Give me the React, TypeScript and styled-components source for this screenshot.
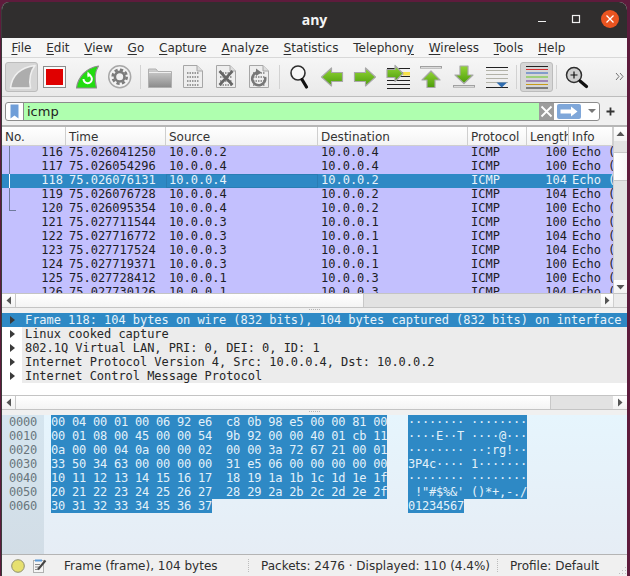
import React from 'react';
import styled, { createGlobalStyle } from 'styled-components';

const GlobalStyle = createGlobalStyle`
  html, body {
    margin: 0;
    padding: 0;
    height: 576px;
    overflow: hidden;
    background: #5e1b3c;
  }
`;

const Window = styled.div`
  box-sizing: border-box;
  width: 626px;
  height: 574px;
  margin: 2px 0 0 1px;
  border-left: 1px solid #3a3a3a;
  border-radius: 8px 8px 0 0;
  background: #f0f0f0;
  display: flex;
  flex-direction: column;
  overflow: hidden;
  font-family: 'DejaVu Sans', sans-serif;
  font-size: 12px;
  color: #2e2e2e;
`;

const TitleBar = styled.div`
  height: 36px;
  flex: none;
  box-sizing: border-box;
  padding-bottom: 1px;
  position: relative;
  background: #302e2e;
  display: flex;
  align-items: center;
  justify-content: center;
`;

const Title = styled.div`
  font-family: 'Open Sans', sans-serif;
  font-weight: 700;
  font-size: 14px;
  color: #f4f4f4;
`;

const WindowControls = styled.div`
  position: absolute;
  right: 0;
  top: 0;
  height: 34px;
  display: flex;
  align-items: center;
`;

const ControlSlot = styled.div`
  width: 34px;
  height: 34px;
  display: flex;
  align-items: center;
  justify-content: center;
`;

const CloseDot = styled.div`
  width: 18px;
  height: 18px;
  border-radius: 50%;
  background: #e95420;
  display: flex;
  align-items: center;
  justify-content: center;
`;

const MenuBar = styled.div`
  height: 19px;
  flex: none;
  display: flex;
  align-items: center;
  padding-left: 2px;
  background: #f6f6f6;
  border-bottom: 1px solid #d8d8d8;
`;

const MenuItem = styled.div`
  padding: 0 7.4px;
  white-space: pre;
  u {
    text-underline-offset: 2px;
  }
`;

const ToolBar = styled.div`
  height: 39px;
  flex: none;
  box-sizing: border-box;
  display: flex;
  align-items: flex-start;
  padding: 4px 0 0 3px;
  background: linear-gradient(#f6f6f6, #e9e9e9);
  border-bottom: 1px solid #bdbdbd;
`;

const ToolSlot = styled.div<{ $active?: boolean }>`
  box-sizing: border-box;
  width: 33px;
  height: 30px;
  flex: none;
  border-radius: 3px;
  border: ${p => (p.$active ? '1px solid #bcbcbc' : '1px solid transparent')};
  background: ${p => (p.$active ? '#d6d6d6' : 'transparent')};
  svg {
    display: block;
    margin: -1px;
  }
`;

const ToolSep = styled.div<{ $w: number }>`
  width: ${p => p.$w}px;
  height: 30px;
  flex: none;
  display: flex;
  justify-content: center;
  &::before {
    content: '';
    width: 1px;
    margin: 3px 0;
    background: #d2d2d2;
  }
`;

const OverflowMark = styled.div`
  margin-left: 22px;
  margin-top: 10px;
  svg {
    display: block;
  }
`;

const FilterRow = styled.div`
  height: 30px;
  flex: none;
  box-sizing: border-box;
  display: flex;
  align-items: flex-start;
  padding: 5px 0 0 3px;
  background: #f0f0f0;
  border-bottom: 2px solid #b6b6b6;
`;

const FilterField = styled.div`
  box-sizing: border-box;
  width: 595px;
  height: 19px;
  display: flex;
  align-items: stretch;
  border: 1px solid #8c8c8c;
  border-radius: 3px;
  background: #ffffff;
  overflow: hidden;
`;

const BookmarkBox = styled.div`
  width: 17px;
  flex: none;
  border-right: 1px solid #8c8c8c;
  display: flex;
  align-items: center;
  justify-content: center;
`;

const FilterInput = styled.div`
  width: 515px;
  flex: none;
  background: #afffaf;
  padding-left: 3px;
  box-sizing: border-box;
  font-size: 13px;
  line-height: 17px;
  color: #222;
`;

const ClearButton = styled.div`
  width: 15px;
  flex: none;
  background: #9c9c9c;
  display: flex;
  align-items: center;
  justify-content: center;
`;

const ApplyButton = styled.div`
  width: 24px;
  flex: none;
  margin: 1px 0 1px 3px;
  border-radius: 2px;
  background: #7fa7d9;
  display: flex;
  align-items: center;
  justify-content: center;
`;

const DropArrow = styled.div`
  margin: 6px 0 0 7px;
  width: 0;
  height: 0;
  border-left: 4px solid transparent;
  border-right: 4px solid transparent;
  border-top: 4px solid #777;
`;

const PlusButton = styled.div`
  margin: 5px 0 0 6px;
  svg {
    display: block;
  }
`;

const columns = '64px 100px 152px 150px 59px 42px 44px';

const ListPane = styled.div`
  height: 181px;
  flex: none;
  box-sizing: border-box;
  display: grid;
  grid-template-columns: 611px 14px;
  grid-template-rows: 166px 14px;
  border-bottom: 1px solid #c4c4c4;
`;

const PacketTable = styled.div`
  overflow: hidden;
  display: flex;
  flex-direction: column;
  background: #c3c0fe;
`;

const HeaderRow = styled.div`
  height: 19px;
  flex: none;
  display: grid;
  grid-template-columns: ${columns};
  background: linear-gradient(#ffffff, #f3f3f3);
`;

const HeaderCell = styled.div`
  box-sizing: border-box;
  padding-left: 3px;
  line-height: 20px;
  overflow: hidden;
  white-space: nowrap;
  border-right: 1px solid #cfcfcf;
  border-bottom: 1px solid #cfcfcf;
  color: #333;
`;

const PacketRow = styled.div<{ $selected?: boolean }>`
  height: 14px;
  flex: none;
  display: grid;
  grid-template-columns: ${columns};
  background: ${p => (p.$selected ? '#2e89c5' : 'transparent')};
  color: ${p => (p.$selected ? '#e8f3fa' : '#1d1d24')};
  font-family: 'DejaVu Sans Mono', monospace;
  font-size: 12px;
  line-height: 12px;
`;

const Cell = styled.div<{ $right?: boolean; $focus?: boolean }>`
  box-sizing: border-box;
  padding: ${p => (p.$right ? '0 2px 0 0' : '0 0 0 3px')};
  text-align: ${p => (p.$right ? 'right' : 'left')};
  white-space: pre;
  overflow: hidden;
  box-shadow: ${p => (p.$focus ? 'inset 0 0 0 1px #2a7db4' : 'none')};
`;

const NumberCell = styled(Cell)<{ $link?: 'mid' | 'end'; $selected?: boolean }>`
  position: relative;
  padding-right: 3px;
  &::before {
    content: ${p => (p.$link ? "''" : 'none')};
    position: absolute;
    left: 7px;
    top: 0;
    width: 1px;
    height: ${p => (p.$link === 'end' ? '8px' : '14px')};
    background: ${p => (p.$selected ? '#ffffff' : '#6f7a9c')};
  }
  &::after {
    content: ${p => (p.$link === 'end' ? "''" : 'none')};
    position: absolute;
    left: 7px;
    top: 8px;
    width: 7px;
    height: 1px;
    background: #6f7a9c;
  }
`;

const VScroll = styled.div`
  display: flex;
  flex-direction: column;
  background: #e2e2e2;
  border-left: 1px solid #cfcfcf;
`;

const ScrollButton = styled.div<{ $w?: number; $h?: number }>`
  box-sizing: border-box;
  flex: none;
  width: ${p => (p.$w ? `${p.$w}px` : '100%')};
  height: ${p => (p.$h ? `${p.$h}px` : '100%')};
  background: linear-gradient(#ffffff, #f2f2f2);
  display: flex;
  align-items: center;
  justify-content: center;
`;

const ScrollThumbV = styled.div`
  height: 27px;
  flex: none;
  margin-top: 11px;
  background: linear-gradient(90deg, #ffffff, #f6f6f6);
  border-top: 1px solid #c8c8c8;
  border-bottom: 1px solid #c8c8c8;
`;

const Spacer = styled.div`
  flex: 1;
`;

const HScroll = styled.div`
  display: flex;
  background: #e2e2e2;
  border-top: 1px solid #c4c4c4;
  box-sizing: border-box;
  height: 14px;
`;

const ScrollThumbH = styled.div<{ $w: number }>`
  width: ${p => p.$w}px;
  flex: none;
  background: linear-gradient(#ffffff, #f4f4f4);
  border-left: 1px solid #c8c8c8;
  border-right: 1px solid #c8c8c8;
  box-sizing: border-box;
`;

const Corner = styled.div`
  background: #ececec;
  border-top: 1px solid #c4c4c4;
  border-left: 1px solid #cfcfcf;
`;

const Splitter = styled.div`
  height: 5px;
  flex: none;
  background: #f0f0f0;
  display: flex;
  justify-content: center;
  padding-top: 1px;
  box-sizing: border-box;
  &::before {
    content: '';
    width: 11px;
    height: 1px;
    background: repeating-linear-gradient(90deg, #b4b4b4 0 1px, transparent 1px 2px);
  }
`;

const DetailPane = styled.div`
  height: 97px;
  flex: none;
  background: #ffffff;
  display: flex;
  flex-direction: column;
`;

const TreeRow = styled.div<{ $selected?: boolean }>`
  height: 14px;
  flex: none;
  display: flex;
  align-items: center;
  padding-left: 8px;
  background: ${p => (p.$selected ? '#2e89c5' : 'transparent')};
  color: ${p => (p.$selected ? '#e8f3fa' : '#262626')};
  font-family: 'DejaVu Sans Mono', monospace;
  font-size: 12px;
  line-height: 14px;
  letter-spacing: -0.04px;
`;

const TreeArrow = styled.div`
  width: 0;
  height: 0;
  flex: none;
  border-top: 4px solid transparent;
  border-bottom: 4px solid transparent;
  border-left: 5px solid #3a3a3a;
`;

const TreeText = styled.div<{ $selected?: boolean }>`
  flex: 1;
  align-self: stretch;
  margin-left: 7px;
  padding-left: 3px;
  white-space: pre;
  overflow: hidden;
  background: ${p => (p.$selected ? 'transparent' : '#ececec')};
`;

const DetailScroll = styled.div`
  height: 13px;
  flex: none;
  margin-top: 12px;
  display: flex;
  background: #e2e2e2;
  border-top: 1px solid #c4c4c4;
  border-bottom: 1px solid #c4c4c4;
`;

const HexPane = styled.div`
  height: 139px;
  flex: none;
  display: flex;
  background: linear-gradient(#e6f5fd, #e6edf5);
  font-family: 'DejaVu Sans Mono', monospace;
  font-size: 12px;
  line-height: 14px;
  letter-spacing: -0.22px;
  white-space: pre;
`;

const OffsetColumn = styled.div`
  width: 42px;
  flex: none;
  box-sizing: border-box;
  padding-left: 7px;
  background: linear-gradient(#d5e5ef, #d2dde6);
  color: #69767d;
`;

const HexColumn = styled.div`
  width: 357px;
  flex: none;
  margin-left: 7px;
`;

const AsciiColumn = styled.div`
  flex: 1;
`;

const ByteLine = styled.div`
  height: 14px;
`;

const Selected = styled.span`
  background: #2e89c5;
  color: #e3f1fa;
  display: inline-block;
  height: 14px;
`;

const StatusBar = styled.div`
  flex: 1;
  position: relative;
  display: flex;
  align-items: center;
  background: #f0f0f0;
  border-top: 1px solid #b4b4b4;
  color: #2e2e2e;
`;

const StatusIcons = styled.div`
  width: 62px;
  flex: none;
  display: flex;
  align-items: center;
  padding-left: 9px;
  box-sizing: border-box;
  gap: 7px;
  svg {
    display: block;
  }
`;

const StatusText = styled.div<{ $w: number }>`
  width: ${p => p.$w}px;
  flex: none;
  white-space: pre;
`;

const StatusSep = styled.div`
  width: 1px;
  height: 14px;
  flex: none;
  margin-right: 12px;
  background: repeating-linear-gradient(#bcbcbc 0 1px, transparent 1px 2px);
`;

const Grip = styled.div`
  position: absolute;
  right: 0;
  bottom: 1px;
  width: 8px;
  height: 8px;
  svg {
    display: block;
  }
`;

const Icon = (props: React.SVGProps<SVGSVGElement>) => (
  <svg width={33} height={30} viewBox="0 0 33 30" fill="none" {...props} />
);

const GreenShape = ({ id, d }: { id: string; d: string }) => (
  <>
    <defs>
      <linearGradient id={id} x1="0" y1="0" x2="0" y2="1">
        <stop offset="0" stopColor="#93d636" />
        <stop offset="1" stopColor="#4c9c0a" />
      </linearGradient>
    </defs>
    <path d={d} fill={`url(#${id})`} stroke="#a8a8a8" strokeWidth="1.2" strokeLinejoin="round" />
  </>
);

const DocShape = ({ children }: { children?: React.ReactNode }) => (
  <>
    <path d="M6.5 3.5H20L25.5 9V25.5H6.5Z" fill="#eeeeee" stroke="#a6a6a6" />
    <path d="M20 3.5V9H25.5" fill="#dddddd" stroke="#a6a6a6" />
    {[11, 15, 19, 23].map(y => (
      <path key={y} d={`M10 ${y}H22`} stroke="#9a9a9a" strokeWidth="2" strokeDasharray="1.5 1" />
    ))}
    {children}
  </>
);

const menus: React.ReactNode[] = [
  <><u>F</u>ile</>,
  <><u>E</u>dit</>,
  <><u>V</u>iew</>,
  <><u>G</u>o</>,
  <><u>C</u>apture</>,
  <><u>A</u>nalyze</>,
  <><u>S</u>tatistics</>,
  <>Telephon<u>y</u></>,
  <><u>W</u>ireless</>,
  <><u>T</u>ools</>,
  <><u>H</u>elp</>,
];

const packets = [
  ['116', '75.026041250', '10.0.0.2', '10.0.0.4', '100'],
  ['117', '75.026054296', '10.0.0.4', '10.0.0.4', '100'],
  ['118', '75.026076131', '10.0.0.4', '10.0.0.2', '104'],
  ['119', '75.026076728', '10.0.0.4', '10.0.0.2', '104'],
  ['120', '75.026095354', '10.0.0.4', '10.0.0.2', '100'],
  ['121', '75.027711544', '10.0.0.3', '10.0.0.1', '100'],
  ['122', '75.027716772', '10.0.0.3', '10.0.0.1', '104'],
  ['123', '75.027717524', '10.0.0.3', '10.0.0.1', '104'],
  ['124', '75.027719371', '10.0.0.3', '10.0.0.1', '100'],
  ['125', '75.027728412', '10.0.0.1', '10.0.0.3', '100'],
  ['126', '75.027730126', '10.0.0.1', '10.0.0.3', '104'],
];

const treeRows = [
  'Frame 118: 104 bytes on wire (832 bits), 104 bytes captured (832 bits) on interface',
  'Linux cooked capture',
  '802.1Q Virtual LAN, PRI: 0, DEI: 0, ID: 1',
  'Internet Protocol Version 4, Src: 10.0.0.4, Dst: 10.0.0.2',
  'Internet Control Message Protocol',
];

const hexLines = [
  ['0000', '00 04 00 01 00 06 92 e6  c8 0b 98 e5 00 00 81 00', '········ ········'],
  ['0010', '00 01 08 00 45 00 00 54  9b 92 00 00 40 01 cb 11', '····E··T ····@···'],
  ['0020', '0a 00 00 04 0a 00 00 02  00 00 3a 72 67 21 00 01', '········ ··:rg!··'],
  ['0030', '33 50 34 63 00 00 00 00  31 e5 06 00 00 00 00 00', '3P4c···· 1·······'],
  ['0040', '10 11 12 13 14 15 16 17  18 19 1a 1b 1c 1d 1e 1f', '········ ········'],
  ['0050', '20 21 22 23 24 25 26 27  28 29 2a 2b 2c 2d 2e 2f', ' !"#$%&\' ()*+,-./'],
  ['0060', '30 31 32 33 34 35 36 37', '01234567'],
];

const TriLeft = () => (
  <svg width="6" height="9" viewBox="0 0 6 9"><path d="M5 0.5V8.5L0.5 4.5Z" fill="#555" /></svg>
);
const TriRight = () => (
  <svg width="6" height="9" viewBox="0 0 6 9"><path d="M1 0.5V8.5L5.5 4.5Z" fill="#555" /></svg>
);

const App: React.FC = () => {
  return (
    <>
      <GlobalStyle />
      <Window>
        <TitleBar>
          <Title>any</Title>
          <WindowControls>
            <ControlSlot>
              <svg width="10" height="10" viewBox="0 0 10 10"><path d="M1 7.5H9" stroke="#f0f0f0" strokeWidth="1.2" /></svg>
            </ControlSlot>
            <ControlSlot>
              <svg width="10" height="10" viewBox="0 0 10 10"><rect x="1.5" y="1.5" width="7" height="7" stroke="#f0f0f0" strokeWidth="1.2" fill="none" /></svg>
            </ControlSlot>
            <ControlSlot>
              <CloseDot>
                <svg width="10" height="10" viewBox="0 0 10 10"><path d="M1.5 1.5L8.5 8.5M8.5 1.5L1.5 8.5" stroke="#fff" strokeWidth="1.3" /></svg>
              </CloseDot>
            </ControlSlot>
          </WindowControls>
        </TitleBar>

        <MenuBar>
          {menus.map((m, i) => (
            <MenuItem key={i}>{m}</MenuItem>
          ))}
        </MenuBar>

        <ToolBar>
          <ToolSlot $active>
            <Icon>
              <path d="M5.5 26C7 14 15 5.5 30 3.5C25 10 24 18 25.5 26Z" fill="#adadad" stroke="#efefef" strokeWidth="1.6" strokeLinejoin="round" />
            </Icon>
          </ToolSlot>
          <ToolSlot>
            <Icon>
              <rect x="5.5" y="4.5" width="22" height="21" fill="#fafafa" stroke="#8a8a8a" />
              <rect x="8" y="7" width="17" height="16" fill="#e00000" />
            </Icon>
          </ToolSlot>
          <ToolSlot>
            <Icon>
              <path d="M5.5 26C7 15 15 6 27.5 4C23.5 10 23.5 18 25.5 26Z" fill="#22dd10" stroke="#8c8c8c" strokeWidth="1.2" strokeLinejoin="round" />
              <path d="M12.5 17A4.2 4.2 0 1 0 16.5 12.8" stroke="#ffffff" strokeWidth="2" />
              <path d="M16.5 9.5L20 13L16.5 15.5Z" fill="#ffffff" />
            </Icon>
          </ToolSlot>
          <ToolSlot>
            <Icon>
              <circle cx="15.7" cy="14.7" r="11" fill="#f2f2f2" stroke="#a8a8a8" strokeWidth="1.5" />
              <circle cx="15.7" cy="14.7" r="7" stroke="#7c7c7c" strokeWidth="2.6" strokeDasharray="3.2 2.3" />
              <circle cx="15.7" cy="14.7" r="4.8" stroke="#7c7c7c" strokeWidth="2.6" />
            </Icon>
          </ToolSlot>
          <ToolSep $w={7} />
          <ToolSlot>
            <Icon>
              <defs>
                <linearGradient id="folderFill" x1="0" y1="0" x2="0" y2="1">
                  <stop offset="0" stopColor="#d2d2d2" />
                  <stop offset="1" stopColor="#8a8a8a" />
                </linearGradient>
              </defs>
              <path d="M4.5 25.5V7H12L14 9.5H27.5V25.5Z" fill="url(#folderFill)" stroke="#b0b0b0" />
              <path d="M5 10.5H27" stroke="#efefef" />
            </Icon>
          </ToolSlot>
          <ToolSlot>
            <Icon><DocShape /></Icon>
          </ToolSlot>
          <ToolSlot>
            <Icon>
              <DocShape>
                <path d="M9.5 9L22.5 23M22.5 9L9.5 23" stroke="#666666" strokeWidth="2.6" />
              </DocShape>
            </Icon>
          </ToolSlot>
          <ToolSlot>
            <Icon>
              <DocShape>
                <path d="M14 10.5A6.5 6.5 0 1 0 22 15" stroke="#777777" strokeWidth="2.6" />
                <path d="M13 6.5L18.5 10.5L13 14Z" fill="#777777" />
              </DocShape>
            </Icon>
          </ToolSlot>
          <ToolSep $w={6} />
          <ToolSlot>
            <Icon>
              <circle cx="16" cy="11" r="7" fill="#f7f7f7" stroke="#2e2e2e" strokeWidth="1.6" />
              <path d="M20 17.5L24.5 25" stroke="#111111" strokeWidth="3.2" strokeLinecap="round" />
            </Icon>
          </ToolSlot>
          <ToolSlot>
            <Icon><GreenShape id="goBack" d="M6.5 15L16.5 6V10.5H27.5V19.5H16.5V24Z" /></Icon>
          </ToolSlot>
          <ToolSlot>
            <Icon><GreenShape id="goForward" d="M27.5 15L17.5 6V10.5H6.5V19.5H17.5V24Z" /></Icon>
          </ToolSlot>
          <ToolSlot>
            <Icon>
              {[6, 10, 14, 18, 22, 26].map(y => (
                <path key={y} d={`M6 ${y + 0.5}H29`} stroke="#222222" />
              ))}
              <rect x="22" y="10" width="7" height="3.5" fill="#f7e04a" />
              <GreenShape id="goTo" d="M22 11.5L14 3.5V7.5H6V15.5H14V19.5Z" />
            </Icon>
          </ToolSlot>
          <ToolSlot>
            <Icon>
              <rect x="6.5" y="4.5" width="21" height="1.6" fill="#ffffff" stroke="#a0a0a0" />
              <GreenShape id="goFirst" d="M17 9L26 18H21V25.5H13V18H8Z" />
            </Icon>
          </ToolSlot>
          <ToolSlot>
            <Icon>
              <GreenShape id="goLast" d="M13 4H21V13H26L17 21.5L8 13H13Z" />
              <rect x="6.5" y="23.5" width="21" height="1.6" fill="#ffffff" stroke="#a0a0a0" />
            </Icon>
          </ToolSlot>
          <ToolSlot>
            <Icon>
              <path d="M6 5.5H28M6 25.5H28" stroke="#222222" />
              {[8.5, 12.5, 16.5, 20.5].map(y => (
                <path key={y} d={`M6 ${y}H28`} stroke="#b2b2a8" strokeWidth="1.2" />
              ))}
              <path d="M16.5 20.5H27L21.7 25.5Z" fill="#2e6cb0" />
            </Icon>
          </ToolSlot>
          <ToolSep $w={7} />
          <ToolSlot $active>
            <Icon>
              <path d="M6 4.5H28" stroke="#222222" />
              <path d="M6 7.5H28" stroke="#d83030" />
              <path d="M6 11H28" stroke="#2e62c0" />
              <path d="M6 15H28" stroke="#66c820" />
              <path d="M6 19H28" stroke="#6a3a96" />
              <path d="M6 22.5H28" stroke="#c89a18" />
              <path d="M6 26H28" stroke="#222222" />
            </Icon>
          </ToolSlot>
          <ToolSep $w={7} />
          <ToolSlot>
            <Icon>
              <circle cx="14" cy="13" r="7.5" fill="#cfcfcf" stroke="#2e2e2e" strokeWidth="1.5" />
              <path d="M10.5 13H17.5M14 9.5V16.5" stroke="#111111" strokeWidth="1.2" />
              <path d="M20 19L26.5 24.5" stroke="#111111" strokeWidth="3.2" strokeLinecap="round" />
            </Icon>
          </ToolSlot>
          <OverflowMark>
            <svg width="9" height="9" viewBox="0 0 9 9" fill="none">
              <path d="M1 1L4 4.5L1 8M5 1L8 4.5L5 8" stroke="#707070" />
            </svg>
          </OverflowMark>
        </ToolBar>

        <FilterRow>
          <FilterField>
            <BookmarkBox>
              <svg width="9" height="15" viewBox="0 0 9 15"><path d="M0.5 0.5H8.5V14.5L4.5 11.5L0.5 14.5Z" fill="#6f9ed8" /></svg>
            </BookmarkBox>
            <FilterInput>icmp</FilterInput>
            <ClearButton>
              <svg width="13" height="13" viewBox="0 0 13 13"><path d="M1.5 1.5L11.5 11.5M11.5 1.5L1.5 11.5" stroke="#ffffff" strokeWidth="1.8" /></svg>
            </ClearButton>
            <ApplyButton>
              <svg width="18" height="11" viewBox="0 0 18 11"><path d="M0.5 3.5H11V0.5L17.5 5.5L11 10.5V7.5H0.5Z" fill="#ffffff" /></svg>
            </ApplyButton>
            <DropArrow />
          </FilterField>
          <PlusButton>
            <svg width="9" height="9" viewBox="0 0 9 9"><path d="M0.5 4.5H8.5M4.5 0.5V8.5" stroke="#333333" strokeWidth="1.8" /></svg>
          </PlusButton>
        </FilterRow>

        <ListPane>
          <PacketTable>
            <HeaderRow>
              {['No.', 'Time', 'Source', 'Destination', 'Protocol', 'Length', 'Info'].map(h => (
                <HeaderCell key={h}>{h}</HeaderCell>
              ))}
            </HeaderRow>
            {packets.map(([no, time, src, dst, len], i) => {
              const selected = no === '118';
              return (
                <PacketRow key={no} $selected={selected}>
                  <NumberCell $right $link={i < 4 ? 'mid' : i === 4 ? 'end' : undefined} $selected={selected}>
                    {no}
                  </NumberCell>
                  <Cell>{time}</Cell>
                  <Cell $focus={selected}>{src}</Cell>
                  <Cell>{dst}</Cell>
                  <Cell>ICMP</Cell>
                  <Cell $right>{len}</Cell>
                  <Cell>{'Echo ('}</Cell>
                </PacketRow>
              );
            })}
          </PacketTable>
          <VScroll>
            <ScrollButton $h={14}>
              <svg width="9" height="6" viewBox="0 0 9 6"><path d="M0.5 5H8.5L4.5 0.5Z" fill="#555" /></svg>
            </ScrollButton>
            <ScrollThumbV />
            <Spacer />
            <ScrollButton $h={13}>
              <svg width="9" height="6" viewBox="0 0 9 6"><path d="M0.5 1H8.5L4.5 5.5Z" fill="#555" /></svg>
            </ScrollButton>
          </VScroll>
          <HScroll>
            <ScrollButton $w={13}><TriLeft /></ScrollButton>
            <ScrollThumbH $w={349} />
            <Spacer />
            <ScrollButton $w={12}><TriRight /></ScrollButton>
          </HScroll>
          <Corner />
        </ListPane>

        <Splitter />

        <DetailPane>
          {treeRows.map((text, i) => (
            <TreeRow key={i} $selected={i === 0}>
              <TreeArrow />
              <TreeText $selected={i === 0}>{text}</TreeText>
            </TreeRow>
          ))}
          <DetailScroll>
            <ScrollButton $w={13}><TriLeft /></ScrollButton>
            <ScrollThumbH $w={536} />
            <Spacer />
            <ScrollButton $w={14}><TriRight /></ScrollButton>
          </DetailScroll>
        </DetailPane>

        <Splitter />

        <HexPane>
          <OffsetColumn>
            {hexLines.map(([offset]) => (
              <ByteLine key={offset}>{offset}</ByteLine>
            ))}
          </OffsetColumn>
          <HexColumn>
            {hexLines.map(([offset, hex]) => (
              <ByteLine key={offset}><Selected>{hex}</Selected></ByteLine>
            ))}
          </HexColumn>
          <AsciiColumn>
            {hexLines.map(([offset, , ascii]) => (
              <ByteLine key={offset}><Selected>{ascii}</Selected></ByteLine>
            ))}
          </AsciiColumn>
        </HexPane>

        <StatusBar>
          <StatusIcons>
            <svg width="14" height="14" viewBox="0 0 14 14"><circle cx="7" cy="7" r="6.3" fill="#e6e070" stroke="#8e8e70" /></svg>
            <svg width="15" height="15" viewBox="0 0 15 15" fill="none">
              <rect x="1.5" y="2.5" width="10" height="12" fill="#f5f5f5" stroke="#b0b0b0" />
              <path d="M3 2.5H10" stroke="#5a9ad8" strokeWidth="2" />
              <path d="M3 6.5H8M3 9H7M3 11.5H6" stroke="#8a8a8a" />
              <path d="M6 11.5L13.5 2.5" stroke="#444444" strokeWidth="2" />
            </svg>
          </StatusIcons>
          <StatusText $w={184}>Frame (frame), 104 bytes</StatusText>
          <StatusSep />
          <StatusText $w={236}>Packets: 2476 · Displayed: 110 (4.4%)</StatusText>
          <StatusSep />
          <StatusText $w={110}>Profile: Default</StatusText>
          <Grip>
            <svg width="8" height="8" viewBox="0 0 8 8" fill="#bdbdbd">
              <rect x="6" y="0" width="1" height="1" />
              <rect x="3" y="3" width="1" height="1" />
              <rect x="6" y="3" width="1" height="1" />
              <rect x="0" y="6" width="1" height="1" />
              <rect x="3" y="6" width="1" height="1" />
              <rect x="6" y="6" width="1" height="1" />
            </svg>
          </Grip>
        </StatusBar>
      </Window>
    </>
  );
};

export default App;
